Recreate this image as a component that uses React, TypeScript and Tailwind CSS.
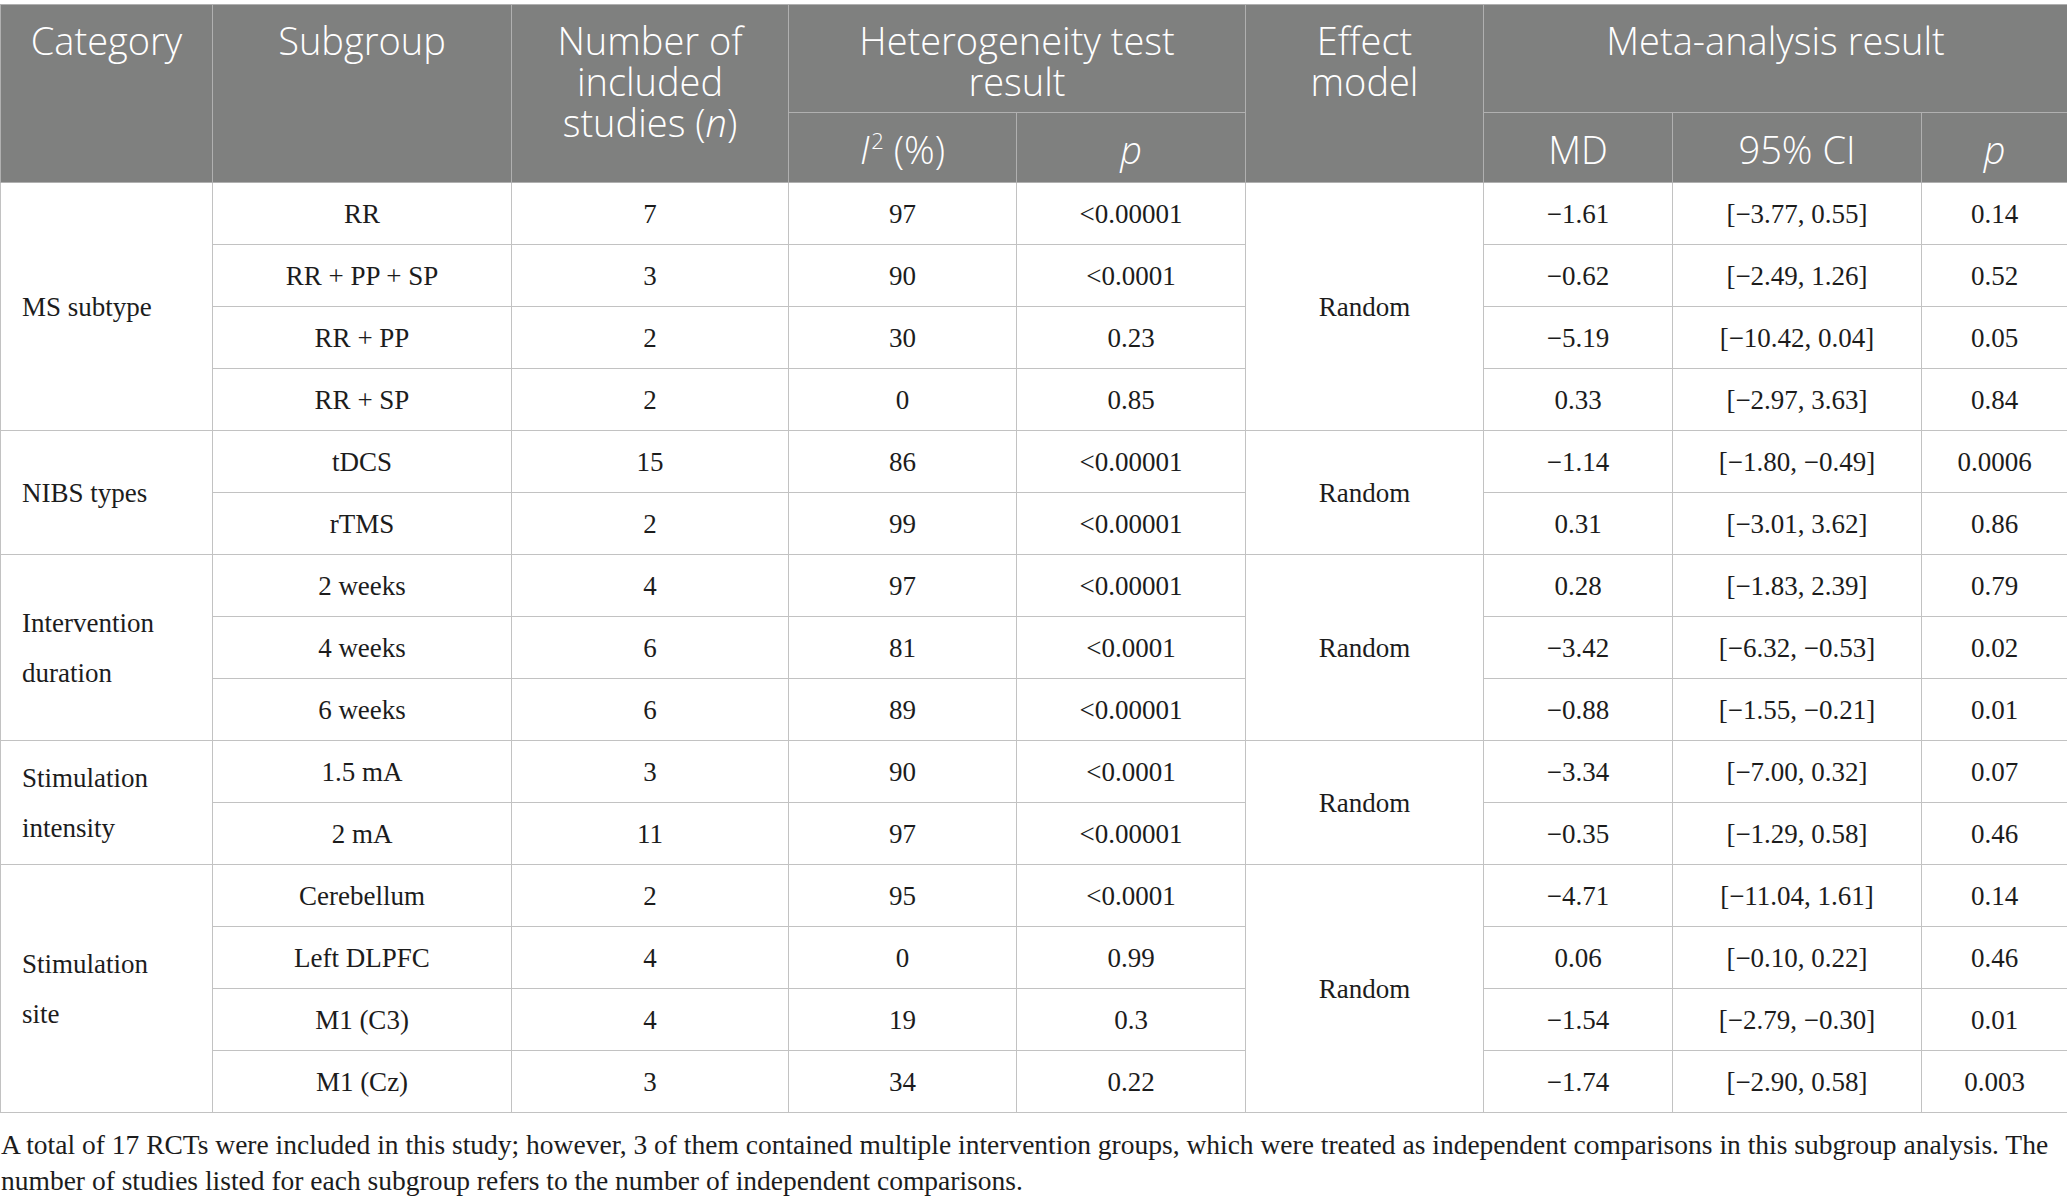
import React from 'react';

type Row = {
  sub: string;
  n: string;
  i2: string;
  p: string;
  md: string;
  ci: string;
  mp: string;
};

type Group = {
  category: string;
  rows: Row[];
};

const groups: Group[] = [
  {
    category: 'MS subtype',
    rows: [
      { sub: 'RR', n: '7', i2: '97', p: '<0.00001', md: '−1.61', ci: '[−3.77, 0.55]', mp: '0.14' },
      { sub: 'RR + PP + SP', n: '3', i2: '90', p: '<0.0001', md: '−0.62', ci: '[−2.49, 1.26]', mp: '0.52' },
      { sub: 'RR + PP', n: '2', i2: '30', p: '0.23', md: '−5.19', ci: '[−10.42, 0.04]', mp: '0.05' },
      { sub: 'RR + SP', n: '2', i2: '0', p: '0.85', md: '0.33', ci: '[−2.97, 3.63]', mp: '0.84' },
    ],
  },
  {
    category: 'NIBS types',
    rows: [
      { sub: 'tDCS', n: '15', i2: '86', p: '<0.00001', md: '−1.14', ci: '[−1.80, −0.49]', mp: '0.0006' },
      { sub: 'rTMS', n: '2', i2: '99', p: '<0.00001', md: '0.31', ci: '[−3.01, 3.62]', mp: '0.86' },
    ],
  },
  {
    category: 'Intervention duration',
    rows: [
      { sub: '2 weeks', n: '4', i2: '97', p: '<0.00001', md: '0.28', ci: '[−1.83, 2.39]', mp: '0.79' },
      { sub: '4 weeks', n: '6', i2: '81', p: '<0.0001', md: '−3.42', ci: '[−6.32, −0.53]', mp: '0.02' },
      { sub: '6 weeks', n: '6', i2: '89', p: '<0.00001', md: '−0.88', ci: '[−1.55, −0.21]', mp: '0.01' },
    ],
  },
  {
    category: 'Stimulation intensity',
    rows: [
      { sub: '1.5 mA', n: '3', i2: '90', p: '<0.0001', md: '−3.34', ci: '[−7.00, 0.32]', mp: '0.07' },
      { sub: '2 mA', n: '11', i2: '97', p: '<0.00001', md: '−0.35', ci: '[−1.29, 0.58]', mp: '0.46' },
    ],
  },
  {
    category: 'Stimulation site',
    rows: [
      { sub: 'Cerebellum', n: '2', i2: '95', p: '<0.0001', md: '−4.71', ci: '[−11.04, 1.61]', mp: '0.14' },
      { sub: 'Left DLPFC', n: '4', i2: '0', p: '0.99', md: '0.06', ci: '[−0.10, 0.22]', mp: '0.46' },
      { sub: 'M1 (C3)', n: '4', i2: '19', p: '0.3', md: '−1.54', ci: '[−2.79, −0.30]', mp: '0.01' },
      { sub: 'M1 (Cz)', n: '3', i2: '34', p: '0.22', md: '−1.74', ci: '[−2.90, 0.58]', mp: '0.003' },
    ],
  },
];

const head =
  'border border-[#b0b0b0] bg-[#7f807f] text-white font-light text-[38px] leading-[41px] text-center align-top pt-[15px] px-2';
const sub =
  'border border-[#b0b0b0] bg-[#7f807f] text-white font-light text-[38px] leading-[41px] text-center align-middle px-2 pt-[4px]';
const cell = 'border border-[#c2c2c2] h-[62px] text-center align-middle px-2 whitespace-nowrap';

export default function App() {
  return (
    <div className="w-[2067px] bg-white pt-[4px] text-[#1c1c1c] font-['Liberation_Serif',serif]">
      <table className="w-[2067px] table-fixed border-collapse text-[27px] leading-[30px]">
        <colgroup>
          <col className="w-[212px]" />
          <col className="w-[299px]" />
          <col className="w-[277px]" />
          <col className="w-[228px]" />
          <col className="w-[229px]" />
          <col className="w-[238px]" />
          <col className="w-[189px]" />
          <col className="w-[249px]" />
          <col className="w-[146px]" />
        </colgroup>
        <thead className="font-['Open_Sans',sans-serif]">
          <tr className="h-[108px]">
            <th rowSpan={2} className={head}>Category</th>
            <th rowSpan={2} className={head}>Subgroup</th>
            <th rowSpan={2} className={head}>
              Number of
              <br />
              included
              <br />
              studies (<i>n</i>)
            </th>
            <th colSpan={2} className={head}>
              Heterogeneity test
              <br />
              result
            </th>
            <th rowSpan={2} className={head}>
              Effect
              <br />
              model
            </th>
            <th colSpan={3} className={head}>Meta-analysis result</th>
          </tr>
          <tr className="h-[70px]">
            <th className={sub}>
              <i>I</i>
              <sup className="text-[22px] relative -top-[15px] ml-[2px]">2</sup> (%)
            </th>
            <th className={sub}><i>p</i></th>
            <th className={sub}>MD</th>
            <th className={sub}>95% CI</th>
            <th className={sub}><i>p</i></th>
          </tr>
        </thead>
        <tbody>
          {groups.map((g) =>
            g.rows.map((r, i) => (
              <tr key={g.category + r.sub}>
                {i === 0 && (
                  <td
                    rowSpan={g.rows.length}
                    className="border border-[#c2c2c2] align-middle text-left pl-[21px] pr-[40px] leading-[50px]"
                  >
                    {g.category}
                  </td>
                )}
                <td className={cell}>{r.sub}</td>
                <td className={cell}>{r.n}</td>
                <td className={cell}>{r.i2}</td>
                <td className={cell}>{r.p}</td>
                {i === 0 && (
                  <td rowSpan={g.rows.length} className="border border-[#c2c2c2] align-middle text-center">
                    Random
                  </td>
                )}
                <td className={cell}>{r.md}</td>
                <td className={cell}>{r.ci}</td>
                <td className={cell}>{r.mp}</td>
              </tr>
            ))
          )}
        </tbody>
      </table>
      <p className="mt-[14px] text-[27.5px] leading-[36px] pl-[1px] whitespace-nowrap">
        A total of 17 RCTs were included in this study; however, 3 of them contained multiple intervention groups, which
        were treated as independent comparisons in this subgroup analysis. The
        <br />
        number of studies listed for each subgroup refers to the number of independent comparisons.
      </p>
    </div>
  );
}
